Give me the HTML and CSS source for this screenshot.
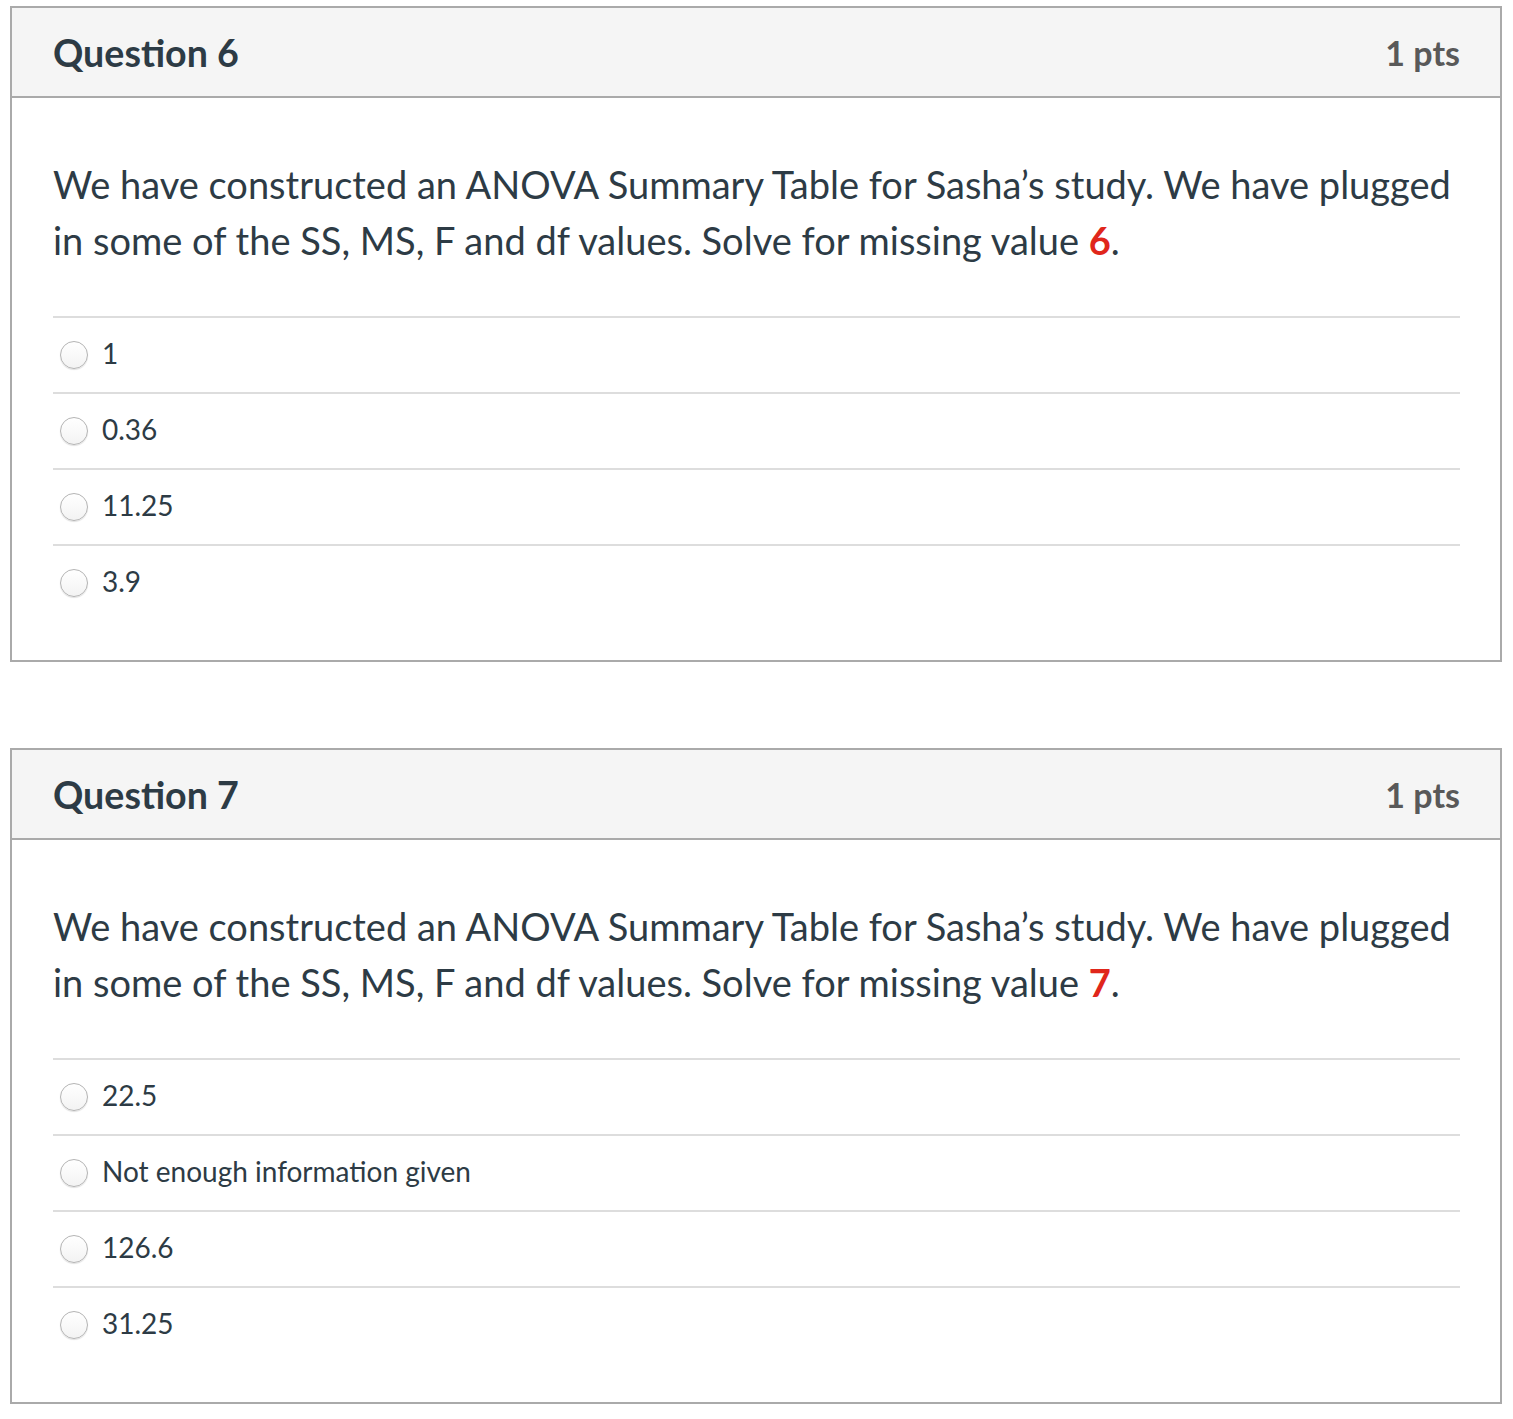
FILE: index.html
```html
<!DOCTYPE html>
<html>
<head>
<meta charset="utf-8">
<link rel="stylesheet" href="styles.css">
</head>
<body>
<div class="quiz">
  <section class="card">
    <header class="card-head">
      <h2 class="q-title">Question 6</h2>
      <span class="q-pts">1 pts</span>
    </header>
    <div class="card-body">
      <p class="q-text">We have constructed an ANOVA Summary Table for Sasha’s study. We have plugged in some of the SS, MS, F and df values. Solve for missing value <span class="hl">6</span>.</p>
      <div class="answers">
        <label class="answer"><span class="radio"></span><span class="a-text">1</span></label>
        <label class="answer"><span class="radio"></span><span class="a-text">0.36</span></label>
        <label class="answer"><span class="radio"></span><span class="a-text">11.25</span></label>
        <label class="answer"><span class="radio"></span><span class="a-text">3.9</span></label>
      </div>
    </div>
  </section>
  <section class="card">
    <header class="card-head">
      <h2 class="q-title">Question 7</h2>
      <span class="q-pts">1 pts</span>
    </header>
    <div class="card-body">
      <p class="q-text">We have constructed an ANOVA Summary Table for Sasha’s study. We have plugged in some of the SS, MS, F and df values. Solve for missing value <span class="hl">7</span>.</p>
      <div class="answers">
        <label class="answer"><span class="radio"></span><span class="a-text">22.5</span></label>
        <label class="answer"><span class="radio"></span><span class="a-text">Not enough information given</span></label>
        <label class="answer"><span class="radio"></span><span class="a-text">126.6</span></label>
        <label class="answer"><span class="radio"></span><span class="a-text">31.25</span></label>
      </div>
    </div>
  </section>
</div>
</body>
</html>
```

FILE: styles.css
```css
html, body {
  background: #ffffff;
}
body {
  margin: 6px 11px 0 10px;
  font-family: Lato, "Noto Sans", sans-serif;
  color: #2d3b45;
}
.quiz {
  display: flex;
  flex-direction: column;
  gap: 86px;
}
.card {
  border: 2px solid #aaaaaa;
  background: #fff;
}
.card-head {
  display: flex;
  justify-content: space-between;
  align-items: center;
  height: 88px;
  padding: 0 40px 0 41px;
  background: #f5f5f5;
  border-bottom: 2px solid #aaaaaa;
}
.q-title {
  margin: 0;
  font-size: 37.6px;
  font-weight: 700;
  color: #2d3b45;
}
.q-pts {
  font-size: 34px;
  font-weight: 700;
  color: #595959;
}
.card-body {
  padding: 58px 40px 40px 41px;
}
.q-text {
  margin: 0 0 48px 0;
  font-size: 38px;
  line-height: 56px;
}
.hl {
  color: #e0261b;
  font-weight: 700;
}
.answers {
  display: flex;
  flex-direction: column;
}
.answer {
  display: flex;
  align-items: center;
  height: 74px;
  border-top: 2px solid #dddddd;
  padding-left: 7px;
  gap: 14px;
}
.radio {
  width: 26px;
  height: 26px;
  border-radius: 50%;
  border: 1px solid #b4b4b4;
  background: linear-gradient(#ffffff, #f3f3f3);
  box-shadow: 0 1px 1px rgba(0,0,0,0.12);
  flex: none;
}
.a-text {
  font-size: 28px;
  color: #2d3b45;
  margin-top: -4px;
}
```
